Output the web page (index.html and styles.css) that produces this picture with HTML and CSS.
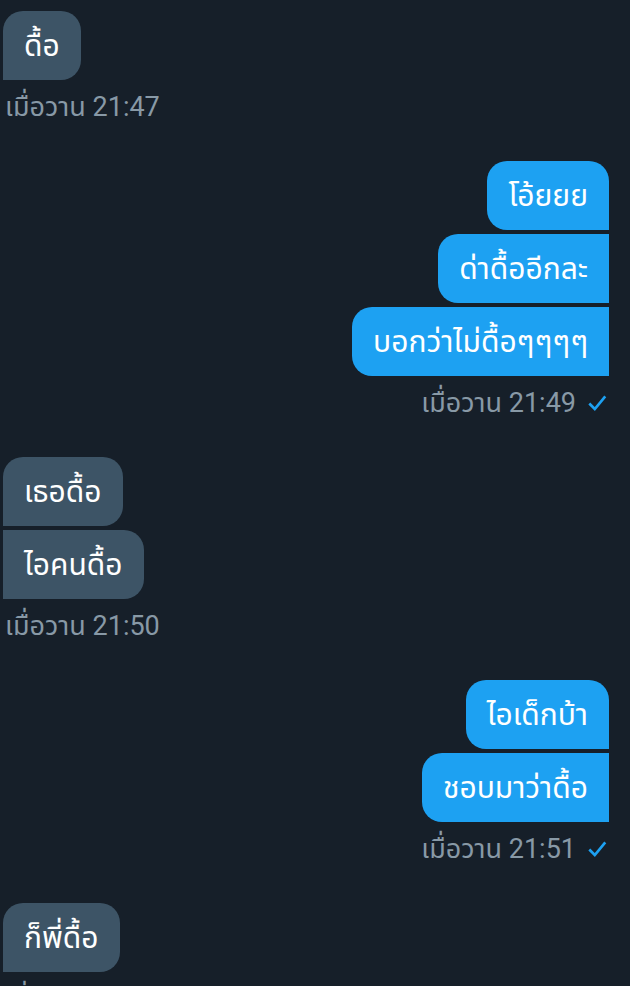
FILE: index.html
```html
<!DOCTYPE html>
<html lang="th">
<head>
    <meta charset="UTF-8">
    <meta name="viewport" content="width=device-width, initial-scale=1.0">
    <title>ข้อความ</title>
    <link rel="stylesheet" href="styles.css">
</head>
<body>
    <div class="chat">
        <div class="group in">
            <div class="bubble">ดื้อ</div>
            <div class="meta">เมื่อวาน 21:47</div>
        </div>

        <div class="group out">
            <div class="bubble">โอ้ยยย</div>
            <div class="bubble">ด่าดื้ออีกละ</div>
            <div class="bubble">บอกว่าไม่ดื้อๆๆๆๆ</div>
            <div class="meta">เมื่อวาน 21:49
                <svg class="check" viewBox="0 0 20 20"><path d="M3 10.5 L8 15.5 L17.5 4" /></svg>
            </div>
        </div>

        <div class="group in">
            <div class="bubble">เธอดื้อ</div>
            <div class="bubble">ไอคนดื้อ</div>
            <div class="meta">เมื่อวาน 21:50</div>
        </div>

        <div class="group out">
            <div class="bubble">ไอเด็กบ้า</div>
            <div class="bubble">ชอบมาว่าดื้อ</div>
            <div class="meta">เมื่อวาน 21:51
                <svg class="check" viewBox="0 0 20 20"><path d="M3 10.5 L8 15.5 L17.5 4" /></svg>
            </div>
        </div>

        <div class="group in">
            <div class="bubble">ก็พี่ดื้อ</div>
            <div class="meta">เมื่อวาน 21:52</div>
        </div>
    </div>
</body>
</html>
```

FILE: styles.css
```css
body {
    margin: 0;
    background-color: #161f29;
    font-family: Roboto, "Noto Sans Thai", "Noto Sans", sans-serif;
    overflow: hidden;
}
.chat {
    display: flex;
    flex-direction: column;
    gap: 35px;
    padding: 11px 21px 0 3px;
}
.group {
    display: flex;
    flex-direction: column;
    gap: 4px;
}
.group.in {
    align-items: flex-start;
}
.group.out {
    align-items: flex-end;
}
.bubble {
    padding: 16px 21px;
    font-size: 30px;
    line-height: 37px;
    color: #ffffff;
    border-radius: 20px;
}
.in .bubble {
    background-color: #3d5466;
    border-radius: 0 20px 20px 0;
}
.in .bubble:first-child {
    border-top-left-radius: 20px;
}
.out .bubble {
    background-color: #1da1f2;
    border-radius: 20px 0 0 20px;
}
.out .bubble:first-child {
    border-top-right-radius: 20px;
}
.meta {
    display: flex;
    align-items: center;
    gap: 10px;
    margin-top: 4px;
    padding-left: 2px;
    font-size: 27px;
    line-height: 38px;
    color: #8899a6;
}
.check {
    width: 22px;
    height: 22px;
    fill: none;
    stroke: #1da1f2;
    stroke-width: 2.4;
    margin-right: 1px;
}
```
